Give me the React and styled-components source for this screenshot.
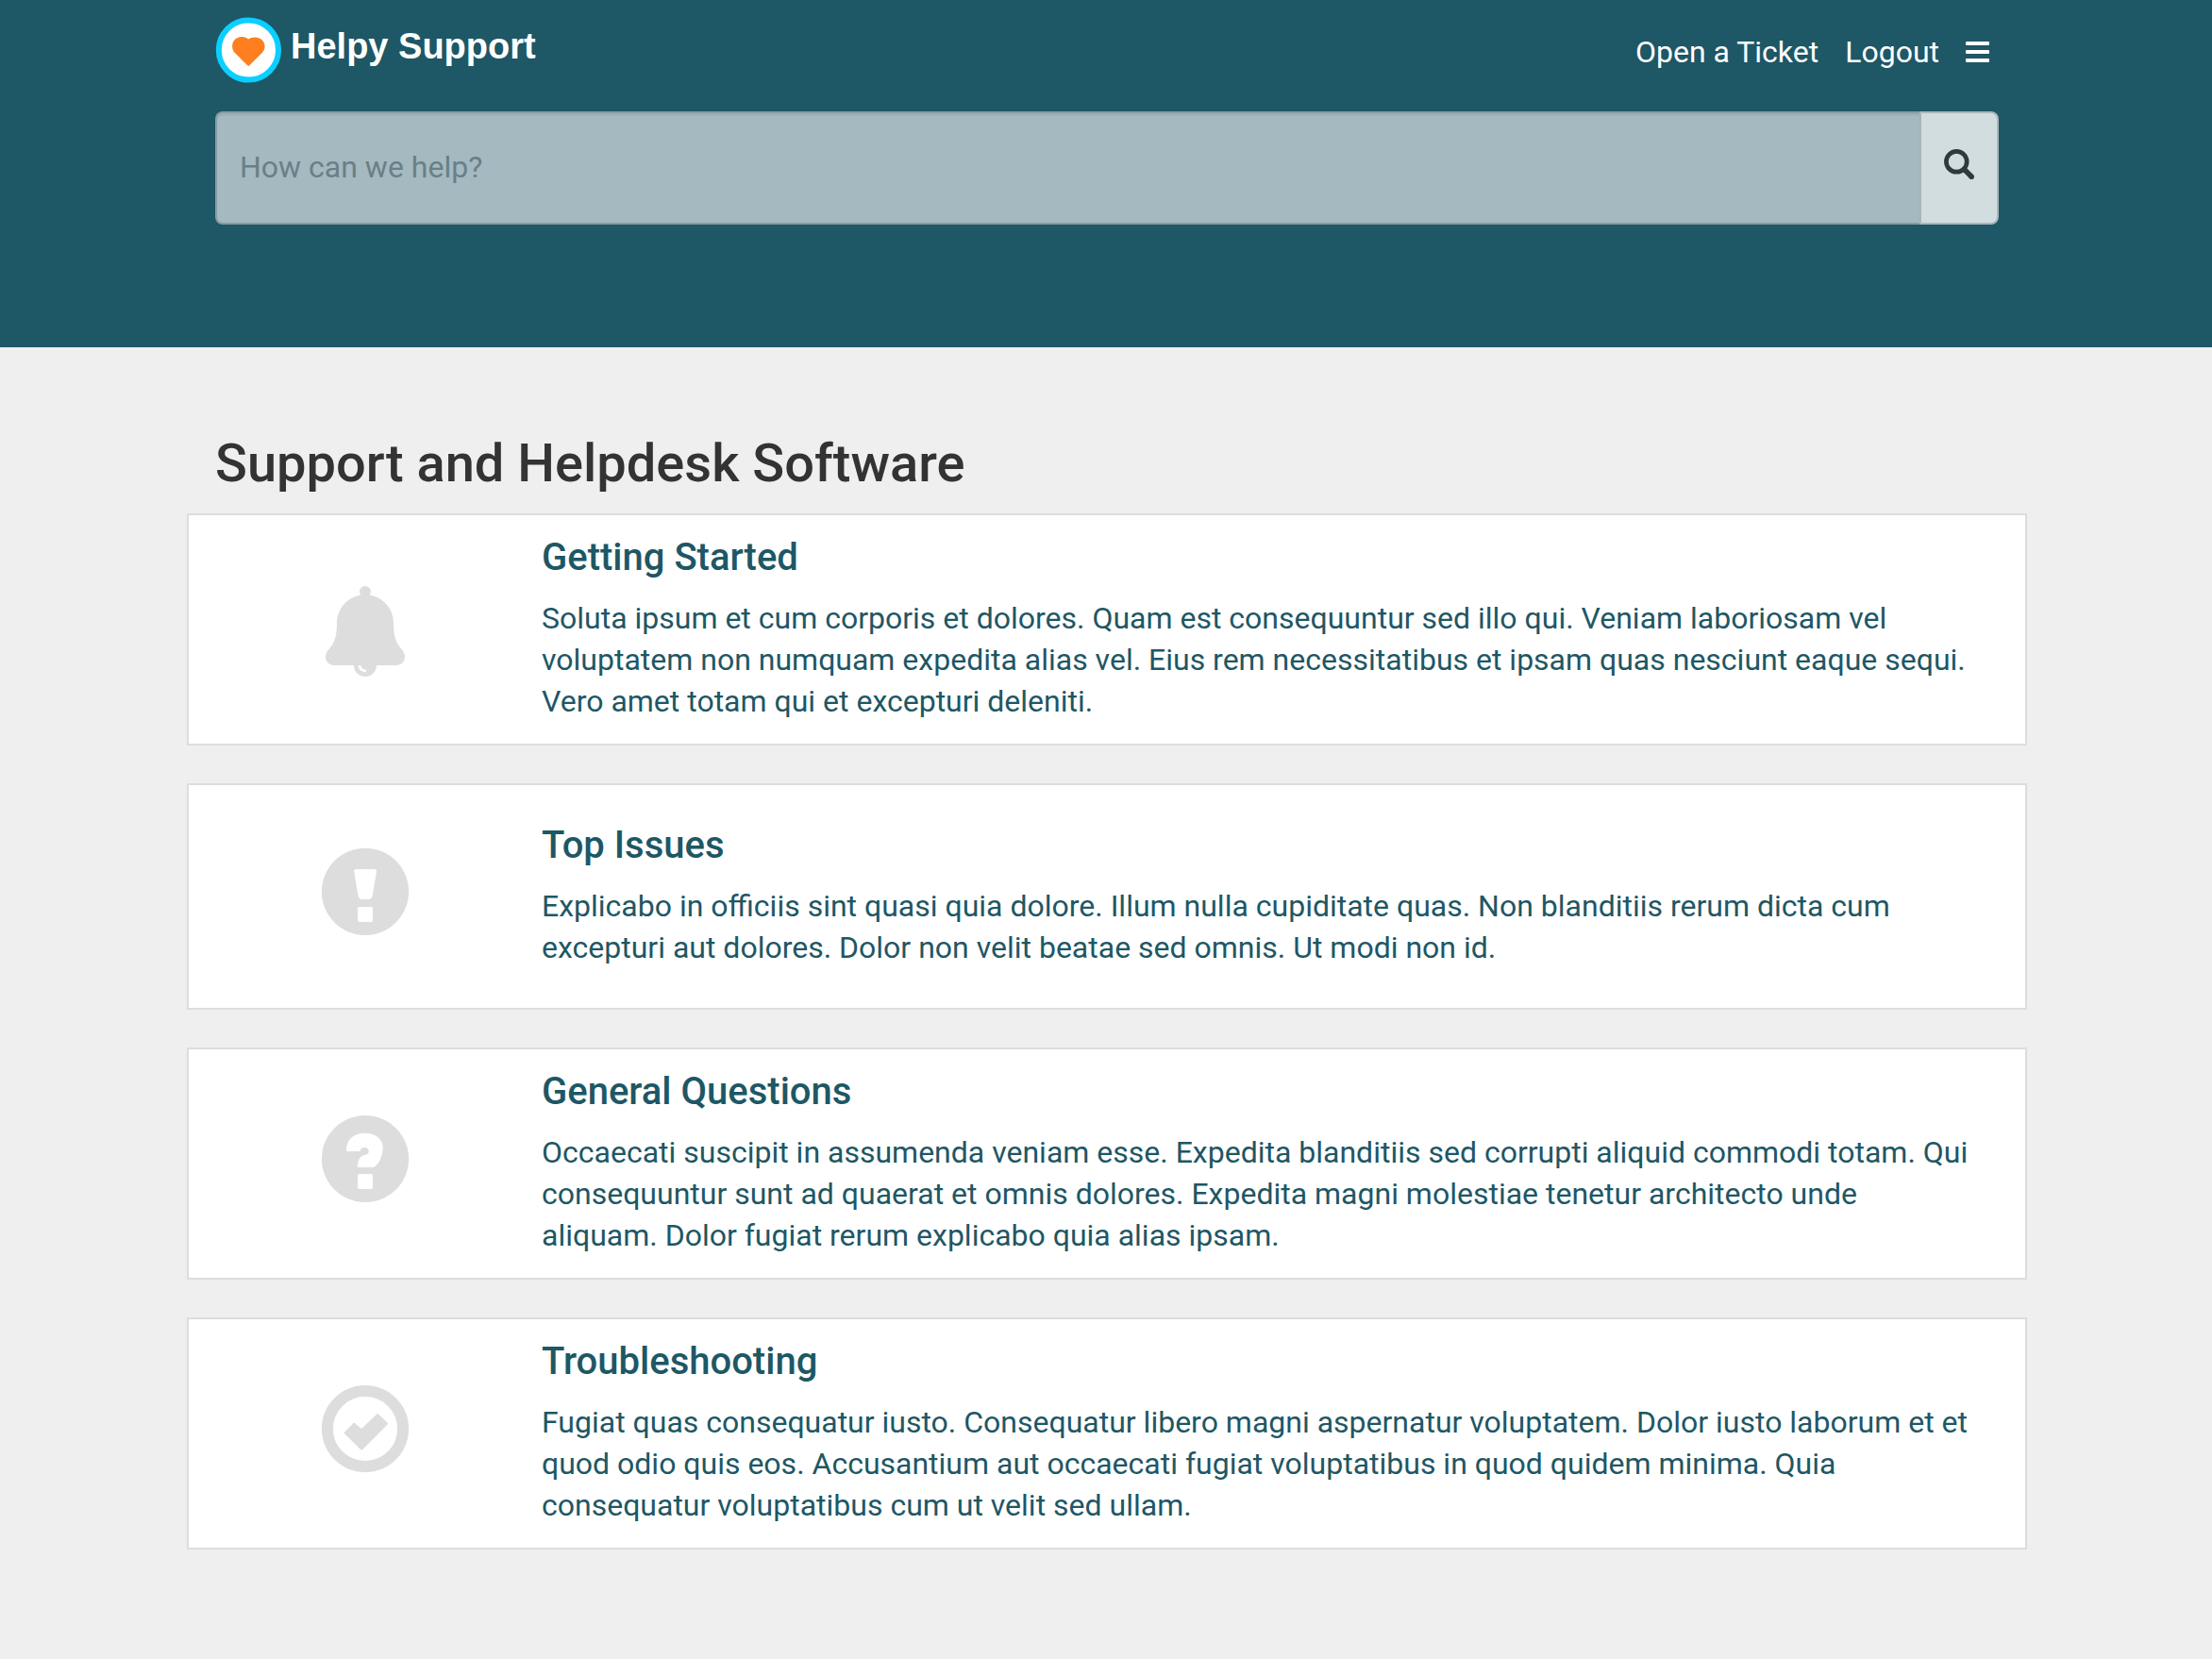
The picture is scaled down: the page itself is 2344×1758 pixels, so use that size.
import React from "react";
import styled, { createGlobalStyle } from "styled-components";

const teal = "#1e5765";

const GlobalStyle = createGlobalStyle`
  *, *::before, *::after { box-sizing: border-box; }
  body {
    margin: 0;
    background: #efefef;
    color: #333333;
    font-family: Roboto, "Liberation Sans", sans-serif;
    font-size: 32px;
    line-height: 44px;
  }
  a { color: inherit; text-decoration: none; }
`;

const Header = styled.header`
  background: ${teal};
  color: #ffffff;
  padding: 18px 24px 130px 26px;
`;

const Container = styled.div`
  max-width: 1950px;
  margin: 0 auto;
  padding: 0 30px;
`;

const TopBar = styled.div`
  display: flex;
  justify-content: space-between;
  align-items: center;
  margin-bottom: 30px;
`;

const Brand = styled.a`
  display: flex;
  align-items: center;
  gap: 10px;
`;

const BrandName = styled.span`
  padding-bottom: 8px;
  font-family: "Liberation Sans", Arial, sans-serif;
  font-size: 38px;
  font-weight: 700;
`;

const Nav = styled.nav`
  display: flex;
  align-items: center;
  gap: 28px;
  padding: 4px 10px 0 0;
`;

const MenuButton = styled.button`
  display: flex;
  padding: 0;
  border: 0;
  background: none;
  color: inherit;
`;

const SearchForm = styled.form`
  display: flex;
  height: 120px;
`;

const SearchInput = styled.input`
  flex: 1;
  min-width: 0;
  padding: 0 24px 2px;
  border: 2px solid #869ca4;
  border-right: 0;
  border-radius: 8px 0 0 8px;
  background: #a5b9c0;
  box-shadow: inset 0 2px 2px rgba(0, 0, 0, 0.07);
  color: #333333;
  font: inherit;
  outline: none;
  &::placeholder { color: #698087; opacity: 1; }
`;

const SearchButton = styled.button`
  display: flex;
  align-items: center;
  justify-content: center;
  width: 84px;
  padding: 0 0 8px;
  border: 2px solid #a9b6b9;
  border-radius: 0 8px 8px 0;
  background: #d2dddf;
  color: #2e3a3d;
`;

const Main = styled.main`
  padding: 92px 24px 60px 26px;
`;

const PageTitle = styled.h1`
  margin: 0 0 22px;
  font-size: 56px;
  font-weight: 500;
  line-height: 62px;
`;

const CardList = styled.div`
  display: flex;
  flex-direction: column;
  gap: 40px;
  max-width: 1950px;
  margin: 0 auto;
`;

const Card = styled.a`
  display: grid;
  grid-template-columns: 374px 1fr;
  align-items: center;
  min-height: 240px;
  border: 2px solid #dddddd;
  background: #ffffff;
`;

const IconCell = styled.div`
  display: flex;
  justify-content: center;
`;

const CardBody = styled.div`
  padding: 23px 56px 23px 0;
  color: ${teal};
`;

const CardTitle = styled.h2`
  margin: 0 0 20px;
  font-size: 40px;
  font-weight: 500;
  line-height: 44px;
`;

const CardText = styled.p`
  margin: 0;
`;

const Logo = () => (
  <svg width="70" height="70" viewBox="0 0 70 70" aria-hidden="true">
    <circle cx="35.400" cy="35" r="31.600" fill="#fff" stroke="#0ccfff" strokeWidth="6" />
    <path
      d="M35.300 52.300L20.800 38C16.800 33.500 17.500 27 21.300 23.600C25.300 20.200 31.800 20.300 35.300 23.600C39.300 20.500 45.800 20.800 49.600 24.300C53.300 28 53.800 34 49.800 38Z"
      fill="#ff7f20"
    />
  </svg>
);

const MenuIcon = () => (
  <svg width="25" height="22" viewBox="0 0 25 22" fill="currentColor" aria-hidden="true">
    <rect width="25" height="4" rx="1" />
    <rect y="9" width="25" height="4" rx="1" />
    <rect y="18" width="25" height="4" rx="1" />
  </svg>
);

const SearchIcon = () => (
  <svg width="32" height="32" viewBox="0 0 32 32" fill="none" stroke="currentColor" aria-hidden="true">
    <circle cx="13.300" cy="13.300" r="10.900" strokeWidth="4.700" />
    <path d="M21 21L29.200 29.200" strokeWidth="5.600" />
    <circle cx="29.200" cy="29.200" r="1.400" strokeWidth="2.800" />
  </svg>
);

const grey = "#dddddd";

const BellIcon = () => (
  <svg width="104" height="104" viewBox="35 15 104 104" aria-hidden="true">
    <circle cx="87" cy="27" r="6" fill={grey} />
    <path
      d="M83 30.500C68 32.500 57.200 45 57 60C57 73 55 81 48.500 88C46.300 90.300 45 93 45 96C45 101 49 105 54 105H120C125 105 129 101 129 96C129 93 127.700 90.300 125.500 88C119 81 117 73 117 60C116.800 45 106 32.500 91 30.500Z"
      fill={grey}
    />
    <path d="M75 105A12 12 0 0 0 99 105Z" fill={grey} />
    <path
      d="M79.500 105.200H82.400C82.800 107.700 84.800 109.500 88 109.800V112.300C83 112 79.700 109.300 79.500 105.200Z"
      fill="#fff"
    />
  </svg>
);

const ExclamationIcon = () => (
  <svg width="104" height="104" viewBox="35 28 104 104" aria-hidden="true">
    <circle cx="87" cy="74.900" r="46.100" fill={grey} />
    <path
      d="M77.500 51H96.700C98.300 51 99.200 52.200 99 53.800L94.700 79C94.300 81.500 92.500 83 90.300 83H83.900C81.700 83 79.900 81.500 79.500 79L75.200 53.800C75 52.200 75.900 51 77.500 51Z"
      fill="#fff"
    />
    <rect x="79" y="91" width="16" height="16" rx="2" fill="#fff" />
  </svg>
);

const QuestionIcon = () => (
  <svg width="104" height="104" viewBox="35 21 104 104" aria-hidden="true">
    <circle cx="87" cy="68" r="46.100" fill={grey} />
    <path
      d="M68.300 60C67.500 60 67 59.500 67 58.500C67 47.500 75 40.700 86.500 40.700C98 40.700 105.700 47 105.700 55.500C105.700 64.500 102 72.500 97.500 75.900C96.700 76.600 96 77 95 77H80C79.300 77 79 76.500 79 75.800C79 70 81 65.500 85.500 64.200C88.500 63.500 90.700 63 90.700 60C90.700 57.500 89 56 86.200 56C83.700 56 82.200 57.200 81.800 59C81.600 59.700 81.200 60 80.500 60Z"
      fill="#fff"
    />
    <rect x="79" y="84" width="16" height="16" rx="2" fill="#fff" />
  </svg>
);

const CheckIcon = () => (
  <svg width="104" height="104" viewBox="35 27 104 104" aria-hidden="true">
    <circle cx="87" cy="74" r="40.100" fill="none" stroke={grey} strokeWidth="12" />
    <path
      d="M66 78.300L75.300 69L83 75.700L100.200 59.300L109.700 68.700L83.200 95.300Z"
      fill={grey}
      stroke={grey}
      strokeWidth="2.500"
      strokeLinejoin="round"
    />
  </svg>
);

const categories = [
  {
    title: "Getting Started",
    Icon: BellIcon,
    text: "Soluta ipsum et cum corporis et dolores. Quam est consequuntur sed illo qui. Veniam laboriosam vel voluptatem non numquam expedita alias vel. Eius rem necessitatibus et ipsam quas nesciunt eaque sequi. Vero amet totam qui et excepturi deleniti.",
  },
  {
    title: "Top Issues",
    Icon: ExclamationIcon,
    text: "Explicabo in officiis sint quasi quia dolore. Illum nulla cupiditate quas. Non blanditiis rerum dicta cum excepturi aut dolores. Dolor non velit beatae sed omnis. Ut modi non id.",
  },
  {
    title: "General Questions",
    Icon: QuestionIcon,
    text: "Occaecati suscipit in assumenda veniam esse. Expedita blanditiis sed corrupti aliquid commodi totam. Qui consequuntur sunt ad quaerat et omnis dolores. Expedita magni molestiae tenetur architecto unde aliquam. Dolor fugiat rerum explicabo quia alias ipsam.",
  },
  {
    title: "Troubleshooting",
    Icon: CheckIcon,
    text: "Fugiat quas consequatur iusto. Consequatur libero magni aspernatur voluptatem. Dolor iusto laborum et et quod odio quis eos. Accusantium aut occaecati fugiat voluptatibus in quod quidem minima. Quia consequatur voluptatibus cum ut velit sed ullam.",
  },
];

export default function App() {
  return (
    <>
      <GlobalStyle />
      <Header>
        <Container>
          <TopBar>
            <Brand href="#">
              <Logo />
              <BrandName>Helpy Support</BrandName>
            </Brand>
            <Nav>
              <a href="#ticket">Open a Ticket</a>
              <a href="#logout">Logout</a>
              <MenuButton type="button" aria-label="Menu">
                <MenuIcon />
              </MenuButton>
            </Nav>
          </TopBar>
          <SearchForm role="search" onSubmit={(e) => e.preventDefault()}>
            <SearchInput type="text" aria-label="How can we help?" placeholder="How can we help?" />
            <SearchButton type="submit" aria-label="Search">
              <SearchIcon />
            </SearchButton>
          </SearchForm>
        </Container>
      </Header>
      <Main>
        <Container>
          <PageTitle>Support and Helpdesk Software</PageTitle>
        </Container>
        <CardList>
          {categories.map(({ title, text, Icon }) => (
            <Card href="#category" key={title}>
              <IconCell>
                <Icon />
              </IconCell>
              <CardBody>
                <CardTitle>{title}</CardTitle>
                <CardText>{text}</CardText>
              </CardBody>
            </Card>
          ))}
        </CardList>
      </Main>
    </>
  );
}
